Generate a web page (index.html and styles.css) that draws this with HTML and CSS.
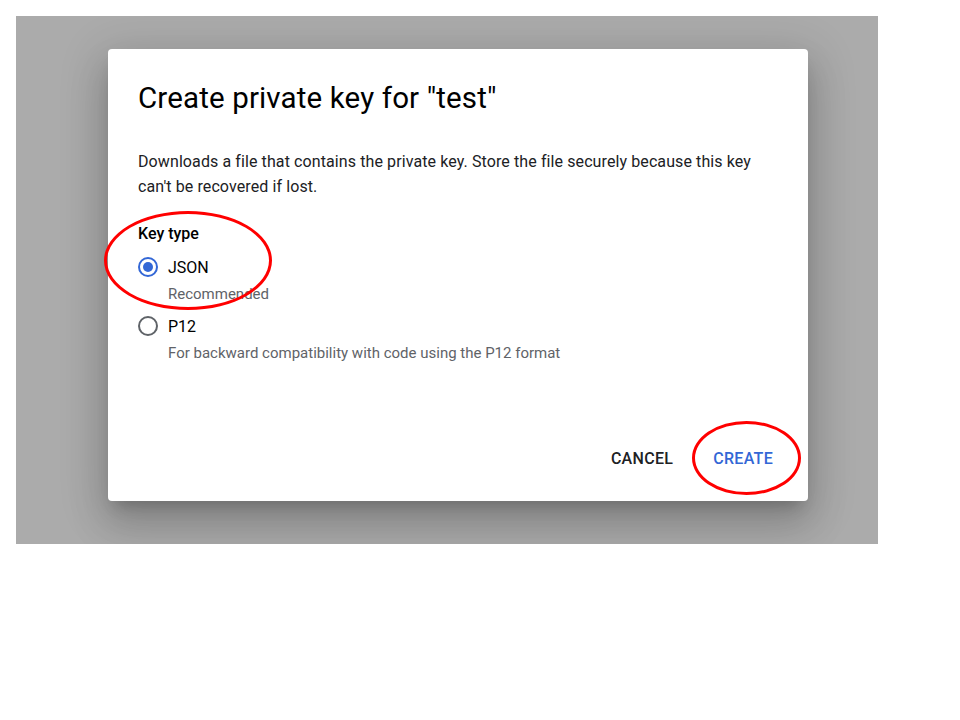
FILE: index.html
```html
<!DOCTYPE html>
<html>
<head>
<meta charset="utf-8">
<link rel="stylesheet" href="styles.css">
</head>
<body>
<div class="backdrop">
  <div class="dialog">
    <h1 class="title">Create private key for "test"</h1>
    <p class="desc">Downloads a file that contains the private key. Store the file securely because this key can't be recovered if lost.</p>
    <div class="group">
      <div class="label">Key type</div>
      <div class="option">
        <span class="radio checked"></span>
        <span class="opt-name">JSON</span>
      </div>
      <div class="hint">Recommended</div>
      <div class="option second">
        <span class="radio"></span>
        <span class="opt-name">P12</span>
      </div>
      <div class="hint">For backward compatibility with code using the P12 format</div>
      <span class="mark mark-key"></span>
    </div>
    <div class="actions">
      <button class="btn cancel">CANCEL</button>
      <button class="btn create">CREATE<span class="mark mark-create"></span></button>
    </div>
  </div>
</div>
</body>
</html>
```
FILE: styles.css
```css
html, body {
  margin: 0;
  padding: 0;
  background: #fff;
}
body {
  font-family: Roboto, "Liberation Sans", sans-serif;
}
.backdrop {
  margin: 16px;
  width: 862px;
  height: 528px;
  background: #ababab;
  padding: 33px 0 0 92px;
  box-sizing: border-box;
  overflow: hidden;
}
.dialog {
  width: 700px;
  height: 452px;
  background: #fff;
  border-radius: 4px;
  box-sizing: border-box;
  padding: 30px 27px 25px 30px;
  box-shadow: 0 11px 15px -7px rgba(0,0,0,.2), 0 24px 38px 3px rgba(0,0,0,.14), 0 9px 46px 8px rgba(0,0,0,.12);
  display: flex;
  flex-direction: column;
}
.title {
  margin: 0;
  font-size: 29.5px;
  font-weight: 400;
  color: #000;
  line-height: 38px;
  letter-spacing: 0.14px;
}
.desc {
  margin: 32px 0 0;
  font-size: 16px;
  line-height: 25px;
  color: #202124;
  padding-right: 10px;
  letter-spacing: 0.1px;
}
.group {
  position: relative;
  margin-top: 25px;
}
.label {
  font-size: 16px;
  font-weight: 500;
  color: #000;
  line-height: 20px;
}
.option {
  display: flex;
  align-items: center;
  gap: 10px;
  margin-top: 13px;
  height: 20px;
}
.option.second {
  margin-top: 13px;
}
.radio {
  width: 20px;
  height: 20px;
  border-radius: 50%;
  border: 2px solid #5f6368;
  box-sizing: border-box;
  position: relative;
}
.radio.checked {
  border-color: #3367d6;
}
.radio.checked::after {
  content: "";
  position: absolute;
  left: 3px;
  top: 3px;
  width: 10px;
  height: 10px;
  border-radius: 50%;
  background: #3367d6;
}
.opt-name {
  font-size: 16px;
  color: #000;
}
.hint {
  margin: 8px 0 0 30px;
  font-size: 15px;
  line-height: 18px;
  color: #5f6368;
}
.actions {
  margin-top: auto;
  display: flex;
  justify-content: flex-end;
  align-items: flex-end;
  gap: 24px;
}
.btn {
  position: relative;
  background: none;
  border: none;
  font-family: Roboto, "Liberation Sans", sans-serif;
  font-size: 16px;
  font-weight: 500;
  padding: 0 8px;
  height: 36px;
  letter-spacing: 0.3px;
  cursor: pointer;
}
.cancel { color: #202124; }
.create { color: #3367d6; }
.mark {
  position: absolute;
  border: 3px solid #f00;
  border-radius: 50%;
  box-sizing: border-box;
  pointer-events: none;
}
.mark-key {
  left: -34px;
  top: -13px;
  width: 168px;
  height: 99px;
}
.mark-create {
  left: -13px;
  top: -19px;
  width: 109px;
  height: 74px;
}
```
